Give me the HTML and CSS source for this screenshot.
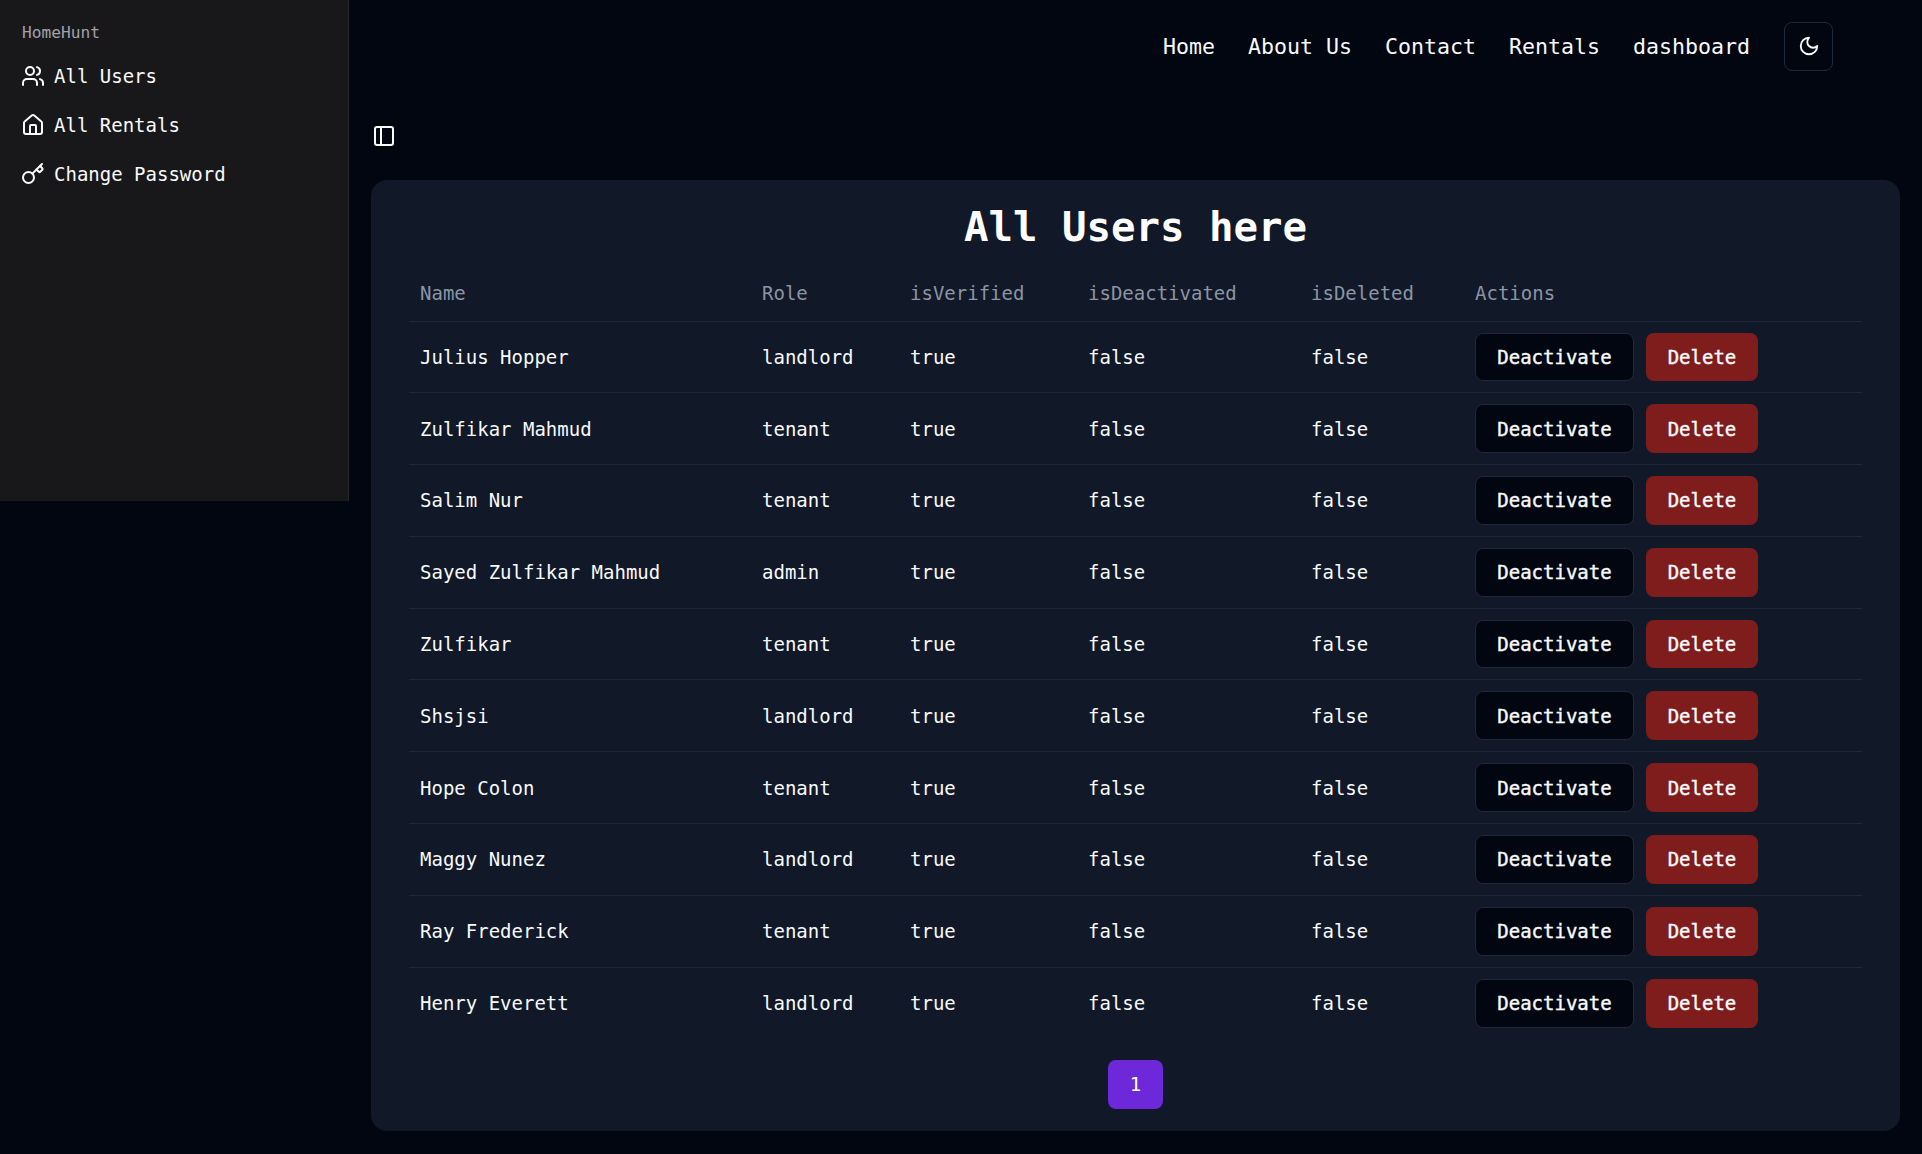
FILE: index.html
```html
<!DOCTYPE html>
<html lang="en">
<head>
<meta charset="utf-8">
<title>HomeHunt</title>
<link rel="stylesheet" href="styles.css">
</head>
<body>
<div class="app">
  <aside class="sidebar">
    <div class="sidebar-label">HomeHunt</div>
    <ul class="menu">
      <li class="menu-item">
        <svg class="icon" viewBox="0 0 24 24"><path d="M16 21v-2a4 4 0 0 0-4-4H6a4 4 0 0 0-4 4v2"/><circle cx="9" cy="7" r="4"/><path d="M22 21v-2a4 4 0 0 0-3-3.87"/><path d="M16 3.13a4 4 0 0 1 0 7.75"/></svg>
        <span>All Users</span>
      </li>
      <li class="menu-item">
        <svg class="icon" viewBox="0 0 24 24"><path d="M15 21v-8a1 1 0 0 0-1-1h-4a1 1 0 0 0-1 1v8"/><path d="M3 10a2 2 0 0 1 .709-1.528l7-5.999a2 2 0 0 1 2.582 0l7 5.999A2 2 0 0 1 21 10v9a2 2 0 0 1-2 2H5a2 2 0 0 1-2-2z"/></svg>
        <span>All Rentals</span>
      </li>
      <li class="menu-item">
        <svg class="icon" viewBox="0 0 24 24"><path d="m15.5 7.5 2.3 2.3a1 1 0 0 0 1.4 0l2.1-2.1a1 1 0 0 0 0-1.4L19 4"/><path d="m21 2-9.6 9.6"/><circle cx="7.5" cy="15.5" r="5.5"/></svg>
        <span>Change Password</span>
      </li>
    </ul>
  </aside>
  <main class="main">
    <header class="topbar">
      <nav class="nav">
        <a class="nav-link">Home</a>
        <a class="nav-link">About Us</a>
        <a class="nav-link">Contact</a>
        <a class="nav-link">Rentals</a>
        <a class="nav-link">dashboard</a>
        <button class="theme-btn"><svg class="icon-moon" viewBox="0 0 24 24"><path d="M12 3a6 6 0 0 0 9 9 9 9 0 1 1-9-9Z"/></svg></button>
      </nav>
    </header>
    <div class="trigger-row">
      <svg class="icon" viewBox="0 0 24 24"><rect x="3" y="3" width="18" height="18" rx="2"/><path d="M9 3v18"/></svg>
    </div>
    <section class="card">
      <h1 class="title">All Users here</h1>
      <table class="table">
        <thead>
          <tr><th class="c-name">Name</th><th class="c-role">Role</th><th class="c-ver">isVerified</th><th class="c-dea">isDeactivated</th><th class="c-del">isDeleted</th><th>Actions</th></tr>
        </thead>
        <tbody>
          <tr><td>Julius Hopper</td><td>landlord</td><td>true</td><td>false</td><td>false</td><td><div class="actions"><button class="btn btn-dark">Deactivate</button><button class="btn btn-red">Delete</button></div></td></tr>
          <tr><td>Zulfikar Mahmud</td><td>tenant</td><td>true</td><td>false</td><td>false</td><td><div class="actions"><button class="btn btn-dark">Deactivate</button><button class="btn btn-red">Delete</button></div></td></tr>
          <tr><td>Salim Nur</td><td>tenant</td><td>true</td><td>false</td><td>false</td><td><div class="actions"><button class="btn btn-dark">Deactivate</button><button class="btn btn-red">Delete</button></div></td></tr>
          <tr><td>Sayed Zulfikar Mahmud</td><td>admin</td><td>true</td><td>false</td><td>false</td><td><div class="actions"><button class="btn btn-dark">Deactivate</button><button class="btn btn-red">Delete</button></div></td></tr>
          <tr><td>Zulfikar</td><td>tenant</td><td>true</td><td>false</td><td>false</td><td><div class="actions"><button class="btn btn-dark">Deactivate</button><button class="btn btn-red">Delete</button></div></td></tr>
          <tr><td>Shsjsi</td><td>landlord</td><td>true</td><td>false</td><td>false</td><td><div class="actions"><button class="btn btn-dark">Deactivate</button><button class="btn btn-red">Delete</button></div></td></tr>
          <tr><td>Hope Colon</td><td>tenant</td><td>true</td><td>false</td><td>false</td><td><div class="actions"><button class="btn btn-dark">Deactivate</button><button class="btn btn-red">Delete</button></div></td></tr>
          <tr><td>Maggy Nunez</td><td>landlord</td><td>true</td><td>false</td><td>false</td><td><div class="actions"><button class="btn btn-dark">Deactivate</button><button class="btn btn-red">Delete</button></div></td></tr>
          <tr><td>Ray Frederick</td><td>tenant</td><td>true</td><td>false</td><td>false</td><td><div class="actions"><button class="btn btn-dark">Deactivate</button><button class="btn btn-red">Delete</button></div></td></tr>
          <tr class="last"><td>Henry Everett</td><td>landlord</td><td>true</td><td>false</td><td>false</td><td><div class="actions"><button class="btn btn-dark">Deactivate</button><button class="btn btn-red">Delete</button></div></td></tr>
        </tbody>
      </table>
      <div class="pagination"><button class="page">1</button></div>
    </section>
  </main>
</div>
</body>
</html>
```

FILE: styles.css
```css
* { box-sizing: border-box; }
html, body { margin: 0; padding: 0; }
body {
  background: #020610;
  color: #f8fafc;
  font-family: "DejaVu Sans Mono", "Liberation Mono", monospace;
  font-size: 19px;
  height: 1154px;
  overflow: hidden;
}
.app { display: flex; align-items: flex-start; }
.sidebar {
  width: 349px;
  height: 501px;
  flex: none;
  background: #18181b;
  border-right: 1px solid #27272a;
  padding: 23px 21px 0;
}
.sidebar-label { font-size: 16.2px; line-height: 20px; color: #a1a1aa; padding-left: 1px; }
.menu { list-style: none; margin: 0; padding: 0; margin-top: 17px; display: flex; flex-direction: column; gap: 17px; }
.menu-item { display: flex; align-items: center; gap: 9px; height: 32px; font-size: 19px; color: #fafafa; }
.icon { width: 24px; height: 24px; flex: none; fill: none; stroke: #fafafa; stroke-width: 2; stroke-linecap: round; stroke-linejoin: round; }
.main { flex: 1; min-width: 0; padding-right: 22px; padding-left: 21px; }
.topbar { display: flex; justify-content: flex-end; padding: 22px 67px 0 0; }
.nav { display: flex; align-items: center; gap: 33px; }
.nav-link { font-size: 21.6px; color: #f8fafc; }
.theme-btn {
  width: 49px; height: 49px; padding: 0; margin-left: 1px;
  display: flex; align-items: center; justify-content: center;
  background: #020610; border: 1px solid #1e293b; border-radius: 8px;
}
.icon-moon { width: 22px; height: 22px; margin-bottom: 2px; fill: none; stroke: #f8fafc; stroke-width: 2; stroke-linecap: round; stroke-linejoin: round; }
.trigger-row { display: flex; align-items: center; height: 24px; margin-top: 53px; margin-left: 2px; }
.card {
  margin-top: 32px;
  margin-left: 1px;
  height: 951px;
  background: #111827;
  border-radius: 16px;
  padding: 0 38px;
}
.title { margin: 0; height: 93px; display: flex; align-items: center; justify-content: center; font-size: 40.7px; font-weight: 700; color: #fff; }
.table { width: 100%; border-collapse: collapse; table-layout: fixed; font-size: 19px; }
.c-name { width: 342px; }
.c-role { width: 148px; }
.c-ver { width: 178px; }
.c-dea { width: 223px; }
.c-del { width: 164px; }
th { height: 48px; padding: 0 11px 8px; text-align: left; font-weight: 400; color: #8b95a5; border-bottom: 1px solid #1f2937; }
td { height: 71.8px; padding: 0 11px; border-bottom: 1px solid #1f2937; color: #f8fafc; }
.last td { border-bottom: 0; }
.actions { display: flex; gap: 12px; }
.btn { height: 48.8px; border-radius: 8px; font-family: inherit; font-size: 19px; font-weight: 400; -webkit-text-stroke: 0.4px #f8fafc; color: #f8fafc; padding: 0; }
.btn-dark { width: 159px; background: #020610; border: 1px solid #1e293b; }
.btn-red { width: 112px; background: #7f1d1d; border: 0; }
.pagination { display: flex; justify-content: center; margin-top: 21px; }
.page { width: 55px; height: 49px; background: #6d28d9; border: 0; border-radius: 8px; color: #fff; font-family: inherit; font-size: 19px; padding: 0; }
```
